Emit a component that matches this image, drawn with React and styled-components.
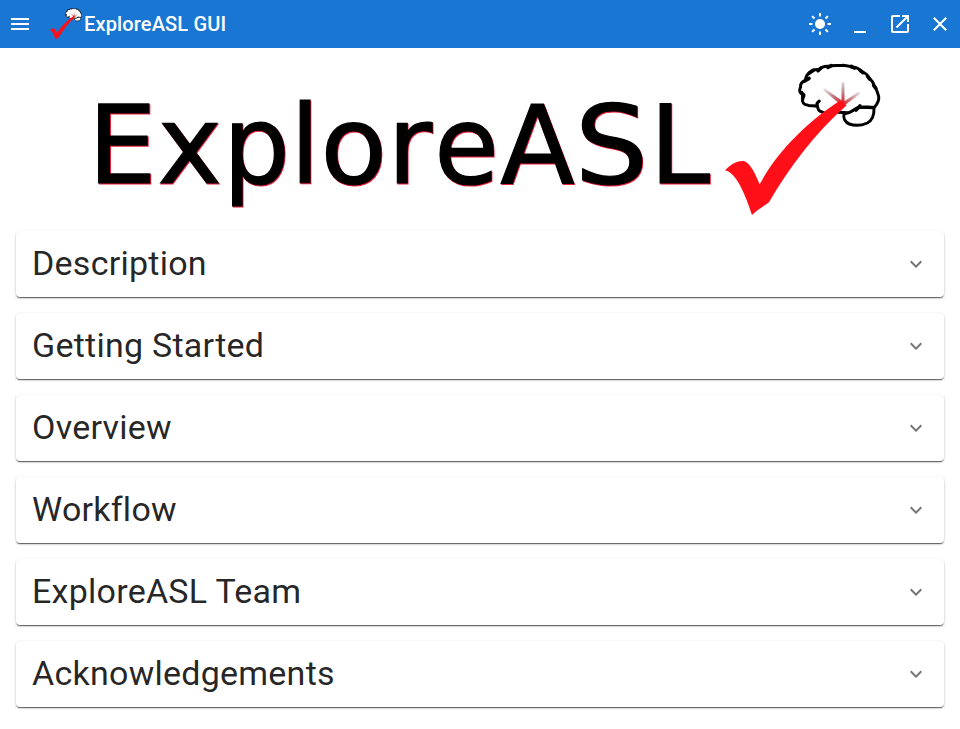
import React from "react";
import styled, { createGlobalStyle } from "styled-components";
import { MdMenu, MdMinimize, MdLaunch, MdClose, MdExpandMore } from "react-icons/md";

const GlobalStyle = createGlobalStyle`
  *, *::before, *::after { box-sizing: border-box; }
  body {
    margin: 0;
    background: #fff;
    color: rgba(0, 0, 0, 0.87);
    font-family: Roboto, "Liberation Sans", sans-serif;
  }
`;

const AppBar = styled.header`
  display: flex;
  align-items: center;
  height: 48px;
  background: #1976d2;
  color: #fff;
`;

const IconButton = styled.button`
  display: flex;
  align-items: center;
  justify-content: center;
  width: 40px;
  height: 40px;
  padding: 0;
  border: 0;
  background: none;
  color: inherit;
  font-size: 24px;
`;

const Brand = styled.div`
  display: flex;
  align-items: center;
  flex: 1;
  margin-left: 10px;
`;

const BrandMark = styled.svg`
  width: 32px;
  height: 32px;
  margin-right: 2px;
`;

const Title = styled.h1`
  margin: 0;
  font-size: 20px;
  font-weight: 500;
  line-height: 32px;
  letter-spacing: 0.15px;
`;

const Banner = styled.svg`
  display: block;
  width: 960px;
  height: 183px;
`;

const WordmarkText = styled.text`
  font-family: "DejaVu Sans", sans-serif;
  font-size: 108.6px;
  stroke-width: 1.2px;
`;

const Sections = styled.main`
  display: flex;
  flex-direction: column;
  gap: 16px;
  padding: 0 16px 20px;
`;

const Panel = styled.section`
  display: flex;
  align-items: center;
  justify-content: space-between;
  height: 66px;
  padding: 0 16px;
  border-radius: 4px;
  background: #fff;
  box-shadow: 0 2px 1px -1px rgba(0, 0, 0, 0.4), 0 1px 1px 0 rgba(0, 0, 0, 0.27),
    0 1px 3px 0 rgba(0, 0, 0, 0.2);
`;

const PanelTitle = styled.h2`
  margin: 0 0 2px;
  font-size: 34px;
  font-weight: 400;
  line-height: 42px;
  letter-spacing: 0.25px;
`;

const Chevron = styled(MdExpandMore)`
  width: 24px;
  height: 24px;
  color: rgba(0, 0, 0, 0.54);
`;

function SunIcon() {
  return (
    <svg width="24" height="24" viewBox="0 0 24 24" aria-hidden="true">
      <circle cx="12" cy="12" r="5" fill="currentColor" />
      <path
        d="M12 1V4.4 M12 19.6V23 M1 12H4.4 M19.6 12H23 M4.1 4.1L6.5 6.5 M17.5 17.5L19.9 19.9 M4.1 19.9L6.5 17.5 M17.5 6.5L19.9 4.1"
        fill="none" stroke="currentColor" strokeWidth="2"
      />
    </svg>
  );
}

const controls = [
  ["Toggle theme", SunIcon],
  ["Minimize", MdMinimize],
  ["Maximize", MdLaunch],
  ["Close", MdClose],
];

const sections = [
  "Description",
  "Getting Started",
  "Overview",
  "Workflow",
  "ExploreASL Team",
  "Acknowledgements",
];

function Wordmark({ color, ...rest }) {
  return (
    <WordmarkText x="88.1 157.5" y="183.1" fill={color} stroke={color} {...rest}>
      Ex<tspan x="223" textLength="67" lengthAdjust="spacingAndGlyphs">p</tspan><tspan x="290 320.4 387.4">lor</tspan><tspan x="434.2" textLength="64.6" lengthAdjust="spacingAndGlyphs">e</tspan><tspan x="500.3">A</tspan><tspan x="574.7" textLength="73.5" lengthAdjust="spacingAndGlyphs">S</tspan><tspan x="649.5">L</tspan>
    </WordmarkText>
  );
}

function CheckBrain({ id }) {
  return (
    <g>
      <defs>
        <linearGradient id={id + "u"} gradientUnits="userSpaceOnUse" x1="399" y1="82" x2="399" y2="145">
          <stop offset="0" stopColor="#8d6670" stopOpacity="0.3" />
          <stop offset="0.5" stopColor="#a3444d" stopOpacity="0.7" />
          <stop offset="1" stopColor="#ee1a20" />
        </linearGradient>
        <linearGradient id={id + "l"} gradientUnits="userSpaceOnUse" x1="340" y1="103" x2="399" y2="145">
          <stop offset="0" stopColor="#8d6670" stopOpacity="0.2" />
          <stop offset="0.5" stopColor="#a3444d" stopOpacity="0.7" />
          <stop offset="1" stopColor="#ee1a20" />
        </linearGradient>
        <linearGradient id={id + "r"} gradientUnits="userSpaceOnUse" x1="450" y1="112" x2="399" y2="148">
          <stop offset="0" stopColor="#8d6670" stopOpacity="0.2" />
          <stop offset="0.5" stopColor="#a3444d" stopOpacity="0.6" />
          <stop offset="1" stopColor="#ee1a20" />
        </linearGradient>
      </defs>
      <path
        d="M402 177 C399 190 406 202 418 207 C434 213 456 211 472 204 C487 196 493 180 492 158 L445 157 L415 173 Z"
        fill="#fff" stroke="#000" strokeWidth="9" strokeLinejoin="round"
      />
      <path
        d="M328 138 C321 143 319 149 322 154 C310 150 300 155 292 150 C282 150 275 142 278 130 C276 124 280 120 275 117 C266 112 269 101 272 96 C270 86 277 80 286 76 C287 66 292 57 301 51 C309 43 319 43 327 44 C335 35 347 33 357 34 C370 29 386 33 399 31 C411 33 420 31 426 37 C438 36 447 41 453 49 C465 53 474 60 476 69 C485 75 491 84 493 95 C502 102 501 111 506 124 C508 137 501 148 494 156 C480 158 462 154 448 157 C438 156 430 170 415 173 C400 172 386 173 376 171 C359 178 341 175 331 169 C322 165 323 158 322 150"
        fill="#fff" stroke="#000" strokeWidth="9" strokeLinejoin="round" strokeLinecap="round"
      />
      <path
        d="M281 119 L278 131 M275 113 L281 122 M284 78 L297 70 M298 54 L310 46 M324 47 L333 39 M354 37 L364 32 M424 34 L433 39 M451 46 L459 53 M473 64 L479 72 M491 91 L497 99 M438 165 L450 153"
        fill="none" stroke="#000" strokeWidth="11" strokeLinecap="round"
      />
      <path d="M395 82 L403 82 L404 148 L394 148 Z" fill={"url(#" + id + "u)"} />
      <path d="M343 100 L402 141 L394 151 L339 105 Z" fill={"url(#" + id + "l)"} />
      <path d="M446 110 L451 116 L402 152 L396 143 Z" fill={"url(#" + id + "r)"} />
      <path
        d="M45 346 C61 330 78 316 102 318 C121 325 135 354 149 388 C190 310 270 215 389 137 L410 151 C315 235 237 338 177 442 C160 454 141 465 126 480 C112 438 83 353 45 346 Z"
        fill="#ff1018"
      />
    </g>
  );
}

export default function App() {
  return (
    <>
      <GlobalStyle />
      <AppBar>
        <IconButton aria-label="Menu"><MdMenu /></IconButton>
        <Brand>
          <BrandMark viewBox="45 22 465 465" aria-hidden="true"><CheckBrain id="small" /></BrandMark>
          <Title>ExploreASL GUI</Title>
        </Brand>
        {controls.map(([label, Icon]) => (
          <IconButton key={label} aria-label={label}><Icon /></IconButton>
        ))}
      </AppBar>
      <Banner viewBox="0 48 960 183" role="img" aria-label="ExploreASL">
        <g transform="translate(0.8 0.8)"><Wordmark color="#e8203a" aria-hidden="true" /></g>
        <Wordmark color="#000" />
        <g transform="translate(710 55) scale(0.33333)"><CheckBrain id="large" /></g>
      </Banner>
      <Sections>
        {sections.map((title) => (
          <Panel key={title}>
            <PanelTitle>{title}</PanelTitle>
            <Chevron />
          </Panel>
        ))}
      </Sections>
    </>
  );
}
